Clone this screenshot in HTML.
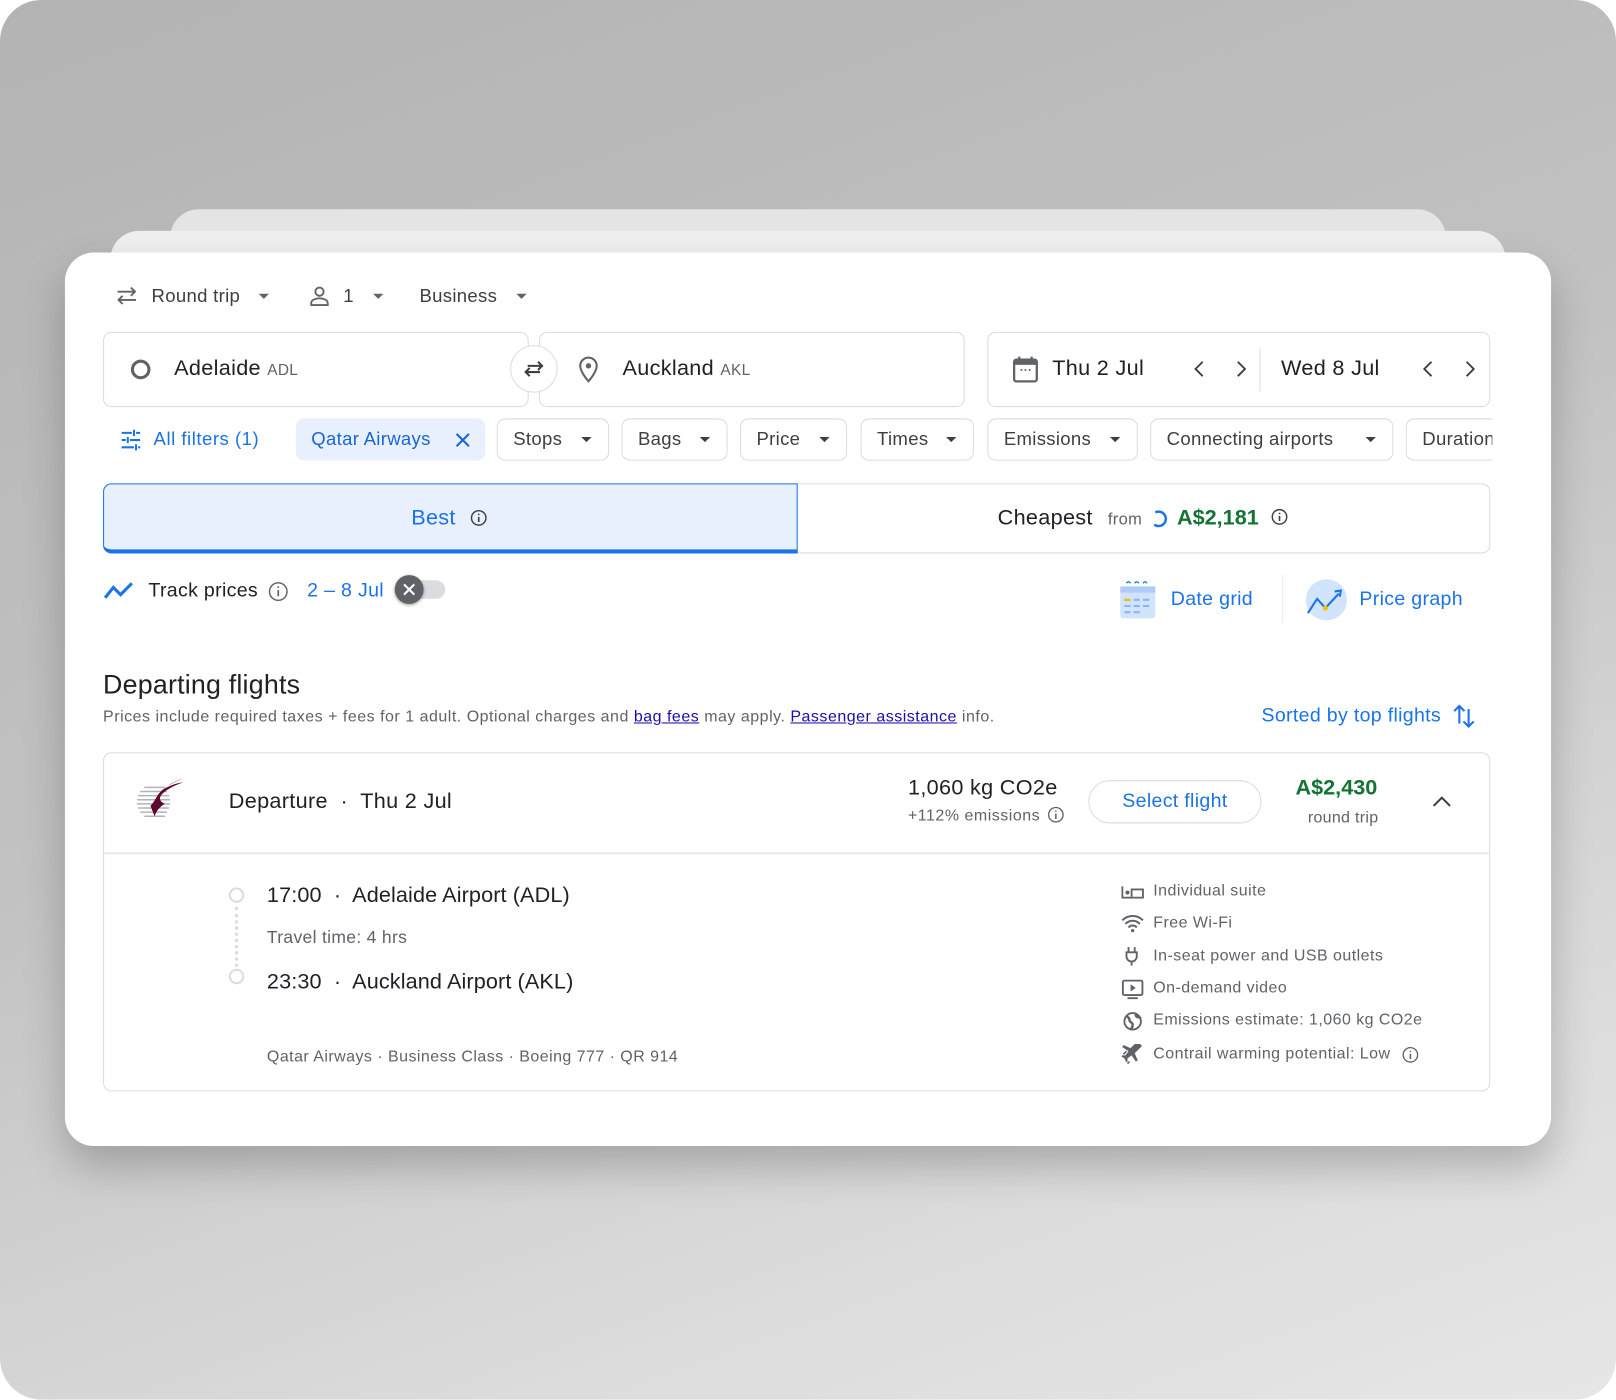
<!DOCTYPE html>
<html><head><meta charset="utf-8">
<style>
*{box-sizing:border-box;margin:0;padding:0}
html,body{width:1616px;height:1400px;overflow:hidden;background:#fff}
#s{position:absolute;left:0;top:0;width:1568px;height:1358px;transform:scale(1.03061);transform-origin:0 0;font-family:"Liberation Sans",sans-serif;color:#202124;letter-spacing:0.3px}
.bg{position:absolute;left:0;top:0;width:1568px;height:1358px;border-radius:40px;background:linear-gradient(160deg,#b3b3b3 0%,#c2c2c2 45%,#dcdcdc 80%,#e6e6e6 100%)}
.a{position:absolute;white-space:nowrap}
.card{position:absolute;background:#fff}
.box{position:absolute;border:1px solid #dadce0;border-radius:8px;background:#fff}
.chip{position:absolute;top:406px;height:41px;border:1px solid #dadce0;border-radius:8px;font-size:18px;line-height:39px;padding-left:15px;color:#3c4043}
.chip .ar{position:absolute;right:16px;top:17px;width:0;height:0;border-left:5px solid transparent;border-right:5px solid transparent;border-top:5px solid #3c4043}
.dd{position:absolute;width:0;height:0;border-left:5px solid transparent;border-right:5px solid transparent;border-top:5px solid #5f6368}
.blue{color:#1a73e8}
.am{font-size:15.5px;color:#5f6368;letter-spacing:0.45px}
</style></head><body>
<div id="s">
<div class="bg"></div>
<div class="card" style="left:165px;top:203px;width:1238px;height:200px;border-radius:28px;background:#e4e4e4"></div>
<div class="card" style="left:107px;top:224px;width:1354px;height:200px;border-radius:28px;background:#efefef"></div>
<div class="card" style="left:63px;top:245px;width:1442px;height:867px;border-radius:28px;box-shadow:0 20px 40px rgba(0,0,0,.22)"></div>

<svg class="a" style="left:111px;top:276px" width="24" height="22" viewBox="0 0 24 22"><path d="M3 7h17M16 3l4 4-4 4M21 15H4M8 11l-4 4 4 4" fill="none" stroke="#5f6368" stroke-width="1.8"/></svg>
<div class="a" style="left:147px;top:276px;font-size:18px;line-height:22px;color:#3c4043">Round trip</div>
<div class="dd" style="left:251px;top:285px"></div>
<svg class="a" style="left:299px;top:276px" width="22" height="22" viewBox="0 0 22 22"><circle cx="11" cy="7" r="4" fill="none" stroke="#5f6368" stroke-width="1.8"/><path d="M3 20v-2c0-3 4-4.5 8-4.5s8 1.5 8 4.5v2z" fill="none" stroke="#5f6368" stroke-width="1.8"/></svg>
<div class="a" style="left:333px;top:276px;font-size:18px;line-height:22px;color:#3c4043">1</div>
<div class="dd" style="left:362px;top:285px"></div>
<div class="a" style="left:407px;top:276px;font-size:18px;line-height:22px;color:#3c4043">Business</div>
<div class="dd" style="left:501px;top:285px"></div>

<div class="box" style="left:100px;top:322px;width:413px;height:73px"></div>
<div class="box" style="left:523px;top:322px;width:413px;height:73px"></div>
<div class="a" style="left:495px;top:335px;width:46px;height:46px;border-radius:50%;background:#fff;border:1px solid #dadce0"></div>
<svg class="a" style="left:505px;top:345px" width="26" height="26" viewBox="0 0 26 26"><path d="M7 10h14M17 6l4 4-4 4M19 16H5M9 12l-4 4 4 4" fill="none" stroke="#3c4043" stroke-width="2"/></svg>
<div class="a" style="left:127px;top:349px;width:19px;height:19px;border-radius:50%;border:3px solid #5f6368"></div>
<div class="a" style="left:169px;top:345px;font-size:21px;line-height:26px">Adelaide <span style="font-size:15px;color:#5f6368">ADL</span></div>
<svg class="a" style="left:560px;top:345px" width="22" height="28" viewBox="0 0 22 28"><path d="M11 2a8 8 0 0 0-8 8c0 6 8 15 8 15s8-9 8-15a8 8 0 0 0-8-8z" fill="none" stroke="#5f6368" stroke-width="2"/><circle cx="11" cy="10" r="2.6" fill="#5f6368"/></svg>
<div class="a" style="left:604px;top:345px;font-size:21px;line-height:26px">Auckland <span style="font-size:15px;color:#5f6368">AKL</span></div>

<div class="box" style="left:958px;top:322px;width:488px;height:73px"></div>
<svg class="a" style="left:982px;top:344px" width="26" height="28" viewBox="0 0 26 28"><rect x="2" y="5" width="22" height="21" rx="2" fill="none" stroke="#5f6368" stroke-width="2.2"/><rect x="2" y="5" width="22" height="5" fill="#5f6368"/><path d="M7 2v5M19 2v5" stroke="#5f6368" stroke-width="2.2"/><circle cx="9" cy="15" r="1" fill="#5f6368"/><circle cx="13" cy="15" r="1" fill="#5f6368"/><circle cx="17" cy="15" r="1" fill="#5f6368"/></svg>
<div class="a" style="left:1021px;top:345px;font-size:21px;line-height:26px">Thu 2 Jul</div>
<svg class="a" style="left:1156px;top:349px" width="56" height="18" viewBox="0 0 56 18"><path d="M11 2L4 9l7 7M45 2l7 7-7 7" fill="none" stroke="#3c4043" stroke-width="1.8"/></svg>
<div class="a" style="left:1222px;top:338px;width:1px;height:42px;background:#dadce0"></div>
<div class="a" style="left:1243px;top:345px;font-size:21px;line-height:26px">Wed 8 Jul</div>
<svg class="a" style="left:1378px;top:349px" width="56" height="18" viewBox="0 0 56 18"><path d="M11 2L4 9l7 7M45 2l7 7-7 7" fill="none" stroke="#3c4043" stroke-width="1.8"/></svg>

<svg class="a" style="left:116px;top:416px" width="22" height="22" viewBox="0 0 22 22"><path d="M2 4h10M16 4h4M2 11h4M10 11h10M2 18h12M18 18h2M14 1v6M8 8v6M16 15v6" stroke="#1a73e8" stroke-width="2" fill="none"/></svg>
<div class="a blue" style="left:149px;top:415px;font-size:18px;line-height:22px;letter-spacing:0.5px">All filters (1)</div>
<div class="a" style="left:287px;top:406px;width:184px;height:41px;border-radius:8px;background:#e8f0fe"></div>
<div class="a" style="left:302px;top:415px;font-size:18px;line-height:22px;color:#1967d2">Qatar Airways</div>
<svg class="a" style="left:441px;top:419px" width="16" height="16" viewBox="0 0 16 16"><path d="M2 2l12 12M14 2L2 14" stroke="#1967d2" stroke-width="2"/></svg>
<div class="chip" style="left:482px;width:109px">Stops<span class="ar"></span></div>
<div class="chip" style="left:603px;width:103px">Bags<span class="ar"></span></div>
<div class="chip" style="left:718px;width:104px">Price<span class="ar"></span></div>
<div class="chip" style="left:835px;width:110px">Times<span class="ar"></span></div>
<div class="chip" style="left:958px;width:146px">Emissions<span class="ar"></span></div>
<div class="chip" style="left:1116px;width:236px">Connecting airports<span class="ar"></span></div>
<div class="a" style="left:1364px;top:404px;width:84px;height:46px;overflow:hidden"><div class="chip" style="left:0;top:2px;width:120px">Duration</div></div>

<div class="box" style="left:100px;top:469px;width:1346px;height:68px"></div>
<div class="a" style="left:100px;top:469px;width:674px;height:68px;background:#e8f0fe;border:1px solid #1a73e8;border-radius:8px 0 0 8px;border-bottom:4px solid #1a73e8"></div>
<div class="a blue" style="left:399px;top:490px;font-size:21px;line-height:26px">Best</div>
<svg class="a" style="left:456px;top:494px" width="17" height="17" viewBox="0 0 17 17"><circle cx="8.5" cy="8.5" r="7" fill="none" stroke="#3c4043" stroke-width="1.4"/><path d="M8.5 7.5v5M8.5 4.5v1.3" stroke="#3c4043" stroke-width="1.6"/></svg>
<div class="a" style="left:968px;top:490px;font-size:21px;line-height:26px">Cheapest</div>
<div class="a" style="left:1075px;top:495px;font-size:16px;line-height:20px;color:#5f6368">from</div>
<svg class="a" style="left:1116px;top:494px" width="18" height="18" viewBox="0 0 18 18"><path d="M5 3.2A7 7 0 1 1 4 15" fill="none" stroke="#1a73e8" stroke-width="2.4"/></svg>
<div class="a" style="left:1142px;top:490px;font-size:21px;line-height:26px;color:#137333;font-weight:bold;letter-spacing:0">A$2,181</div>
<svg class="a" style="left:1233px;top:493px" width="17" height="17" viewBox="0 0 17 17"><circle cx="8.5" cy="8.5" r="7" fill="none" stroke="#3c4043" stroke-width="1.4"/><path d="M8.5 7.5v5M8.5 4.5v1.3" stroke="#3c4043" stroke-width="1.6"/></svg>

<svg class="a" style="left:100px;top:563px" width="32" height="20" viewBox="0 0 32 20"><path d="M2 17l8-10 7 7 11-11" fill="none" stroke="#1a73e8" stroke-width="3"/></svg>
<div class="a" style="left:144px;top:562px;font-size:19px;line-height:23px;font-weight:500">Track prices</div>
<svg class="a" style="left:260px;top:564px" width="20" height="20" viewBox="0 0 20 20"><circle cx="10" cy="10" r="8.5" fill="none" stroke="#5f6368" stroke-width="1.4"/><path d="M10 8.5v6M10 5v1.5" stroke="#5f6368" stroke-width="1.6"/></svg>
<div class="a blue" style="left:298px;top:562px;font-size:19px;line-height:23px">2 – 8 Jul</div>
<div class="a" style="left:392px;top:563px;width:40px;height:18px;border-radius:9px;background:#dadce0"></div>
<div class="a" style="left:383px;top:558px;width:28px;height:28px;border-radius:50%;background:#5f6368;box-shadow:0 1px 3px rgba(0,0,0,.4)"></div>
<svg class="a" style="left:389px;top:564px" width="16" height="16" viewBox="0 0 16 16"><path d="M3 3l10 10M13 3L3 13" stroke="#fff" stroke-width="2"/></svg>

<svg class="a" style="left:1086px;top:563px" width="36" height="38" viewBox="0 0 36 38"><rect x="1" y="6" width="34" height="31" rx="3" fill="#d2e3fc"/><rect x="1" y="6" width="34" height="6" fill="#aecbfa"/><path d="M7 3q2-3 4 0M15 3q2-3 4 0M23 3q2-3 4 0" fill="none" stroke="#1a73e8" stroke-width="1.2"/><path d="M5 19h6M14 19h6M23 19h6M5 25h6M14 25h6M23 25h6M5 31h6M14 31h6" stroke="#8ab4f8" stroke-width="2"/><path d="M5 19h6" stroke="#fbbc04" stroke-width="2"/></svg>
<div class="a blue" style="left:1136px;top:570px;font-size:19px;line-height:23px">Date grid</div>
<div class="a" style="left:1244px;top:558px;width:1px;height:46px;background:#e8eaed"></div>
<svg class="a" style="left:1266px;top:561px" width="44" height="42" viewBox="0 0 44 42"><circle cx="21" cy="21" r="20" fill="#d2e3fc"/><path d="M3 34l9-14 8 9 13-14" fill="none" stroke="#1a73e8" stroke-width="2"/><path d="M29 13l6-1-1 6" fill="none" stroke="#1a73e8" stroke-width="2"/><circle cx="20" cy="29" r="2.5" fill="#fbbc04"/></svg>
<div class="a blue" style="left:1319px;top:570px;font-size:19px;line-height:23px">Price graph</div>

<div class="a" style="left:100px;top:648px;font-size:26px;line-height:32px;font-weight:500;letter-spacing:0.2px">Departing flights</div>
<div class="a" style="left:100px;top:686px;font-size:15.5px;line-height:20px;color:#5f6368;letter-spacing:0.5px">Prices include required taxes + fees for 1 adult. Optional charges and <span style="color:#1a0dab;text-decoration:underline">bag fees</span> may apply. <span style="color:#1a0dab;text-decoration:underline">Passenger assistance</span> info.</div>
<div class="a blue" style="left:1224px;top:683px;font-size:19px;line-height:23px">Sorted by top flights</div>
<svg class="a" style="left:1409px;top:682px" width="24" height="26" viewBox="0 0 24 26"><path d="M7 20V3M2 8l5-5 5 5M16 6v17M11 18l5 5 5-5" fill="none" stroke="#1a73e8" stroke-width="2"/></svg>

<div class="box" style="left:100px;top:730px;width:1346px;height:329px"></div>
<div class="a" style="left:101px;top:827px;width:1344px;height:2px;background:#e8eaed"></div>
<svg class="a" style="left:132px;top:754px" width="48" height="42" viewBox="0 0 48 42"><g stroke="#b0b3b8" stroke-width="1.5"><path d="M4 14h26M2 18h30M1 22h32M1 26h32M2 30h30M4 34h26M8 38h20M8 10h20"/></g><path d="M46 1C36 5 28 10 24 14c-4 4-6 10-10 14l4 10c2-6 6-10 10-12-4-2-6-4-4-8 3-4 10-9 22-13C38 6 31 9 27 12c4-4 10-8 19-11z" fill="#5c0632"/></svg>
<div class="a" style="left:222px;top:765px;font-size:21px;line-height:26px;font-weight:500">Departure &nbsp;·&nbsp; Thu 2 Jul</div>
<div class="a" style="left:881px;top:752px;font-size:21px;line-height:26px">1,060 kg CO2e</div>
<div class="a" style="left:881px;top:782px;font-size:15.5px;line-height:19px;color:#5f6368;letter-spacing:0.5px">+112% emissions</div>
<svg class="a" style="left:1016px;top:782px" width="17" height="17" viewBox="0 0 17 17"><circle cx="8.5" cy="8.5" r="7" fill="none" stroke="#5f6368" stroke-width="1.3"/><path d="M8.5 7.5v5M8.5 4.5v1.3" stroke="#5f6368" stroke-width="1.5"/></svg>
<div class="a" style="left:1056px;top:757px;width:168px;height:42px;border:1px solid #dadce0;border-radius:21px;text-align:center;font-size:19px;line-height:40px;color:#1a73e8">Select flight</div>
<div class="a" style="left:1257px;top:752px;font-size:21px;line-height:26px;color:#137333;font-weight:bold;letter-spacing:0">A$2,430</div>
<div class="a" style="left:1269px;top:784px;font-size:15.5px;line-height:19px;color:#5f6368">round trip</div>
<svg class="a" style="left:1388px;top:769px" width="22" height="16" viewBox="0 0 22 16"><path d="M3 13l8-8 8 8" fill="none" stroke="#3c4043" stroke-width="2"/></svg>

<div class="a" style="left:222px;top:861px;width:15px;height:15px;border-radius:50%;border:2px solid #dadce0"></div>
<div class="a" style="left:228px;top:880px;width:0;height:58px;border-left:3px dotted #dadce0"></div>
<div class="a" style="left:222px;top:940px;width:15px;height:15px;border-radius:50%;border:2px solid #dadce0"></div>
<div class="a" style="left:259px;top:856px;font-size:21px;line-height:26px;letter-spacing:0.1px">17:00 &nbsp;·&nbsp; Adelaide Airport (ADL)</div>
<div class="a" style="left:259px;top:899px;font-size:17px;line-height:22px;color:#5f6368">Travel time: 4 hrs</div>
<div class="a" style="left:259px;top:940px;font-size:21px;line-height:26px;letter-spacing:0.1px">23:30 &nbsp;·&nbsp; Auckland Airport (AKL)</div>
<div class="a am" style="left:259px;top:1016px;line-height:20px">Qatar Airways · Business Class · Boeing 777 · QR 914</div>

<svg class="a" style="left:1088px;top:858px" width="22" height="14" viewBox="0 0 22 14"><path d="M1 2v11h20V5H10v7" fill="none" stroke="#5f6368" stroke-width="1.8"/><circle cx="6" cy="8" r="2" fill="#5f6368"/></svg>
<div class="a am" style="left:1119px;top:855px;line-height:20px">Individual suite</div>
<svg class="a" style="left:1088px;top:887px" width="22" height="18" viewBox="0 0 22 18"><path d="M1 6a14 14 0 0 1 20 0M4 9.5a9.5 9.5 0 0 1 14 0M7 13a5 5 0 0 1 8 0" fill="none" stroke="#5f6368" stroke-width="2"/><circle cx="11" cy="16" r="1.6" fill="#5f6368"/></svg>
<div class="a am" style="left:1119px;top:886px;line-height:20px">Free Wi-Fi</div>
<svg class="a" style="left:1090px;top:918px" width="16" height="20" viewBox="0 0 16 20"><path d="M5 1v5M11 1v5M3 6h10v4a5 5 0 0 1-10 0zM8 15v4" fill="none" stroke="#5f6368" stroke-width="1.8"/></svg>
<div class="a am" style="left:1119px;top:918px;line-height:20px">In-seat power and USB outlets</div>
<svg class="a" style="left:1088px;top:950px" width="22" height="20" viewBox="0 0 22 20"><rect x="1.5" y="1.5" width="19" height="14" rx="1.5" fill="none" stroke="#5f6368" stroke-width="1.8"/><path d="M9 5l5 3.5-5 3.5z" fill="#5f6368"/><path d="M6 18.5h10" stroke="#5f6368" stroke-width="1.8"/></svg>
<div class="a am" style="left:1119px;top:949px;line-height:20px">On-demand video</div>
<svg class="a" style="left:1089px;top:981px" width="20" height="20" viewBox="0 0 20 20"><circle cx="10" cy="10" r="8" fill="none" stroke="#5f6368" stroke-width="1.8"/><path d="M4 5c2 1 3 2 3 4s3 2 3 4-1 4-2 5M13 3c0 2 1 3 3 3l2 1" fill="none" stroke="#5f6368" stroke-width="2.4"/></svg>
<div class="a am" style="left:1119px;top:980px;line-height:20px">Emissions estimate: 1,060 kg CO2e</div>
<svg class="a" style="left:1088px;top:1013px" width="22" height="20" viewBox="0 0 22 20"><path d="M20 2l-7 7 3 7-2 1-4-6-4 3v3l-1 1-2-4-3-2 1-1h3l3-4-6-4 1-2 7 3 7-7z" fill="#5f6368"/><path d="M2 10l3-3M3 14l2-2M6 19l2-2" stroke="#5f6368" stroke-width="1.5"/></svg>
<div class="a am" style="left:1119px;top:1013px;line-height:20px">Contrail warming potential: Low</div>
<svg class="a" style="left:1360px;top:1015px" width="17" height="17" viewBox="0 0 17 17"><circle cx="8.5" cy="8.5" r="7" fill="none" stroke="#5f6368" stroke-width="1.3"/><path d="M8.5 7.5v5M8.5 4.5v1.3" stroke="#5f6368" stroke-width="1.5"/></svg>
</div>
</body></html>
